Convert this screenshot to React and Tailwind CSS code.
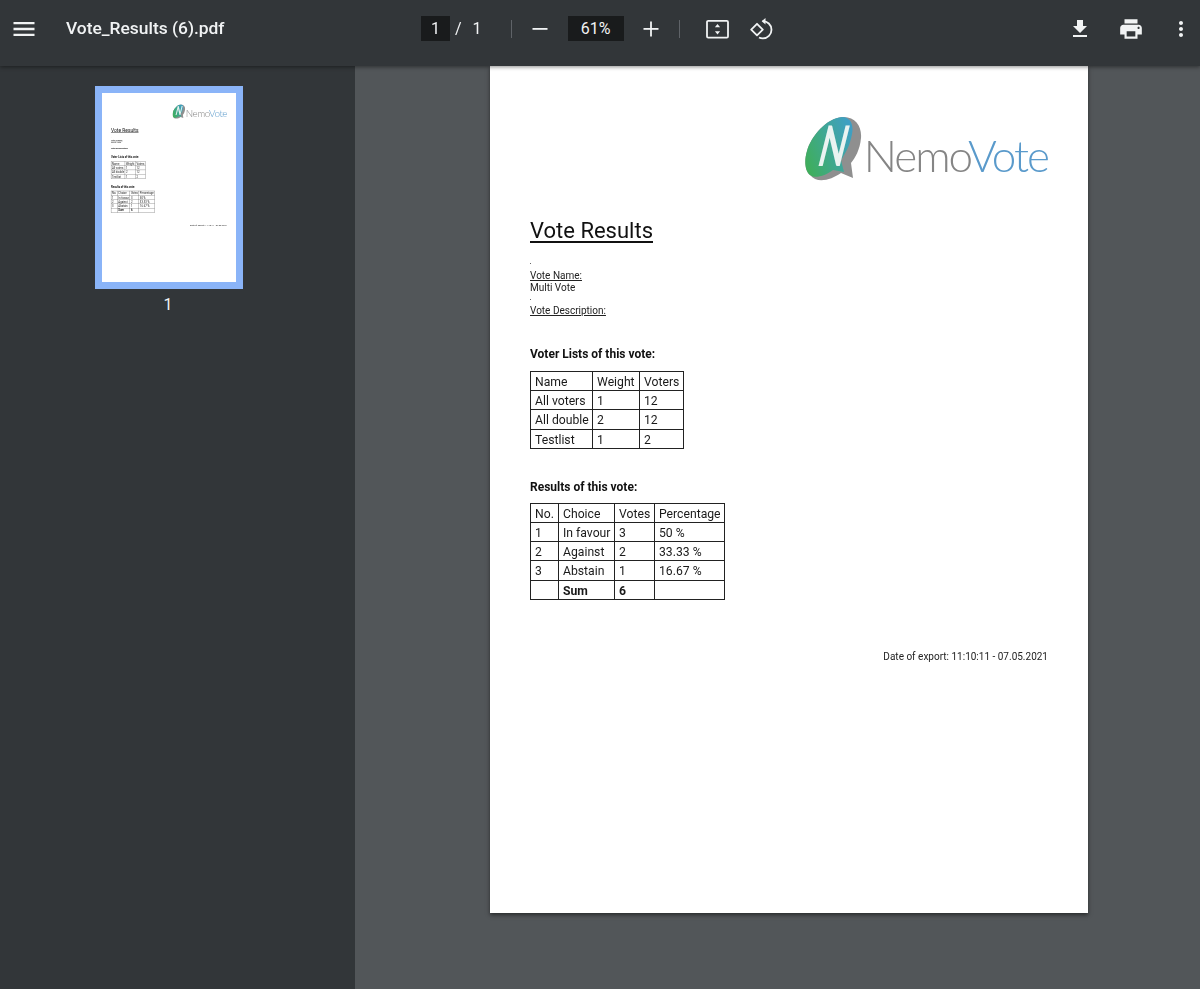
import React from "react";

const voterRows = [
  ["Name", "Weight", "Voters"],
  ["All voters", "1", "12"],
  ["All double", "2", "12"],
  ["Testlist", "1", "2"],
];

const resultRows = [
  ["No.", "Choice", "Votes", "Percentage"],
  ["1", "In favour", "3", "50 %"],
  ["2", "Against", "2", "33.33 %"],
  ["3", "Abstain", "1", "16.67 %"],
  ["", "Sum", "6", ""],
];

const Icon = ({ d, className }) => (
  <svg viewBox="0 0 24 24" fill="currentColor" className={className}>
    <path d={d} />
  </svg>
);

const Logo = ({ id }) => (
  <div className="flex h-[70px]">
    <div className="relative w-[58px] h-[70px] shrink-0">
      <svg viewBox="0 0 58 70" className="w-[58px] h-[70px]">
        <defs>
          <linearGradient id={id} x1="0" y1="0.75" x2="1" y2="0.25">
            <stop offset="0" stopColor="#3fae5c" />
            <stop offset="0.55" stopColor="#3fa796" />
            <stop offset="1" stopColor="#3f9fc4" />
          </linearGradient>
        </defs>
        <path d="M37 1C50 0 57 10 56 22C55 34 50 42 46 47L48 62L36 57C26 64 12 68 5 59C0 55-1 45 2 35C6 20 22 2 37 1z" fill="#8f8f8f" />
        <path d="M37 1C45 1 49 8 47 18C45 30 40 38 36 44L39 56L28 54C20 60 10 63 5 59C0 55-1 45 2 35C6 20 22 2 37 1z" fill={`url(#${id})`} />
      </svg>
      {/* the N sits on the bubble */}
      <span className="absolute left-[9px] top-[1px] origin-bottom-left [transform:skewX(-14deg)_scaleX(0.62)] font-['Lato',sans-serif] font-bold text-[56px] leading-none text-[#eaf3f1]">
        N
      </span>
    </div>
    <span className="ml-[1px] pt-[17px] font-['Lato',sans-serif] font-light text-[44px] tracking-[-2px] leading-none text-[#858585]">
      Nemo<span className="text-[#5a9acb]">Vote</span>
    </span>
  </div>
);

const DocTable = ({ rows, columns, lastBold }) => (
  <table className="border-collapse table-fixed text-[12.2px] leading-[16px] text-[#1a1a1a] border border-[#222]">
    <colgroup>
      {columns.map((w, i) => (
        <col key={i} style={{ width: w }} />
      ))}
    </colgroup>
    <tbody>
      {rows.map((row, r) => (
        <tr key={r} className="h-[19.2px]">
          {row.map((cell, c) => (
            <td
              key={c}
              className={`border border-[#222] p-0 pl-[4px] pt-[2px] whitespace-nowrap ${
                lastBold && r === rows.length - 1 ? "font-bold" : ""
              }`}
            >
              {cell}
            </td>
          ))}
        </tr>
      ))}
    </tbody>
  </table>
);

const PdfPage = ({ logoId }) => (
  <div className="w-[598px] h-[847px] bg-white font-['Roboto',sans-serif] text-[#111]">
    <div className="pt-[50px] px-[40px] will-change-transform">
      <div className="flex justify-end">
        <Logo id={logoId} />
      </div>
      <h1 className="mt-[31px] text-[22px] leading-[28px] underline underline-offset-[3px]">Vote Results</h1>
      <div className="mt-[18px] mb-[6px] w-px h-px bg-[#666]" />
      <p className="text-[10px] leading-[12px] underline text-[#222]">Vote Name:</p>
      <p className="text-[10px] leading-[12px] text-[#222]">Multi Vote</p>
      <div className="mt-[5px] mb-[5px] w-px h-px bg-[#666]" />
      <p className="text-[10px] leading-[12px] underline text-[#222]">Vote Description:</p>
      <p className="mt-[30px] text-[12px] leading-[14px] font-bold">Voter Lists of this vote:</p>
      <div className="mt-[10px]">
        <DocTable rows={voterRows} columns={[62, 47, 44]} />
      </div>
      <p className="mt-[31px] text-[12px] leading-[14px] font-bold">Results of this vote:</p>
      <div className="mt-[9px]">
        <DocTable rows={resultRows} columns={[28, 56, 40, 70]} lastBold />
      </div>
      <p className="mt-[51px] text-right text-[10px] leading-[12px] text-[#222]">Date of export: 11:10:11 - 07.05.2021</p>
    </div>
  </div>
);

export default function App() {
  return (
    <div className="w-[1200px] h-[989px] overflow-hidden flex flex-col bg-[#323639] font-['Roboto',sans-serif] text-[#f1f3f4] antialiased">
      {/* Toolbar */}
      <header className="relative z-10 h-[66px] shrink-0 flex items-center bg-[#323639] pb-[9px] shadow-[0_1px_4px_rgba(0,0,0,0.45)]">
        <Icon d="M3 18h18v-2H3v2zm0-5h18v-2H3v2zm0-7v2h18V6H3z" className="ml-[10px] w-[28px] h-[28px]" />
        <span className="ml-[28px] w-[355px] text-[17.4px] font-medium leading-none">Vote_Results (6).pdf</span>

        <div className="flex items-center text-[16px]">
          <span className="w-[29px] h-[25px] bg-[#191b1c] flex items-center justify-center">1</span>
          <span className="ml-[5px]">/</span>
          <span className="ml-[11px]">1</span>
          <span className="ml-[29px] w-px h-[18px] bg-[#5f6368]" />
          <svg viewBox="0 0 16 16" className="ml-[20px] w-[16px] h-[16px]" fill="currentColor">
            <rect x="0.5" y="7" width="15" height="1.8" />
          </svg>
          <span className="ml-[20px] w-[56px] h-[25px] bg-[#191b1c] flex items-center justify-center">61%</span>
          <svg viewBox="0 0 16 16" className="ml-[19px] w-[16px] h-[16px]" fill="currentColor">
            <rect x="0.5" y="7" width="15" height="1.8" />
            <rect x="7.1" y="0.5" width="1.8" height="15" />
          </svg>
          <span className="ml-[20px] w-px h-[18px] bg-[#5f6368]" />
          <svg viewBox="0 0 24 24" className="ml-[25px] w-[24px] h-[24px]" fill="currentColor">
            <rect x="2" y="3.900" width="21" height="16.800" rx="1.200" fill="none" stroke="currentColor" strokeWidth="1.800" />
            <path d="M12.500 7l2.600 3.300H9.900zM12.500 17.600l-2.600-3.300h5.200z" />
          </svg>
          <svg viewBox="0 0 24 24" className="ml-[21px] w-[24px] h-[24px]" fill="none" stroke="currentColor" strokeWidth="1.800">
            <path d="M7 6.800l5.800 5.800L7 18.400l-5.800-5.800z" strokeLinejoin="round" />
            <path d="M12.500 4.200c4.800-.2 9 3.500 9 8.500 0 4.800-3.900 8.700-8.700 8.700-1.400 0-2.700-.3-3.800-.9" />
            <path d="M15.500.9l-3.800 3.300 3.800 3.300z" fill="currentColor" stroke="none" />
          </svg>
        </div>

        <div className="ml-auto flex items-center">
          <Icon d="M19 9h-4V3H9v6H5l7 7 7-7zM5 18v2h14v-2H5z" className="w-[24px] h-[24px]" />
          <Icon d="M19 8H5c-1.660 0-3 1.340-3 3v6h4v4h12v-4h4v-6c0-1.660-1.340-3-3-3zm-3 11H8v-5h8v5zm3-7c-.550 0-1-.450-1-1s.450-1 1-1 1 .450 1 1-.450 1-1 1zm-1-9H6v4h12V3z" className="ml-[26px] w-[26px] h-[26px]" />
          <Icon d="M12 8c1.100 0 2-.900 2-2s-.900-2-2-2-2 .900-2 2 .900 2 2 2zm0 2c-1.100 0-2 .900-2 2s.900 2 2 2 2-.900 2-2-.900-2-2-2zm0 6c-1.100 0-2 .900-2 2s.900 2 2 2 2-.900 2-2-.900-2-2-2z" className="ml-[25px] mr-[7px] w-[24px] h-[24px]" />
        </div>
      </header>

      <div className="flex-1 flex min-h-0">
        {/* Thumbnail sidebar */}
        <aside className="w-[355px] shrink-0 bg-[#323639] flex flex-col items-center pt-[20px] pr-[17px]">
          <div className="w-[148px] h-[203px] border-[7px] border-[#8ab4f8] bg-white overflow-hidden">
            <div className="w-[598px] h-[847px] origin-top-left scale-[0.224]">
              <PdfPage logoId="bubble-thumb" />
            </div>
          </div>
          <span className="mt-[8px] mr-[2px] text-[16px] leading-[16px]">1</span>
        </aside>

        {/* Viewer */}
        <main className="flex-1 bg-[#525659] pl-[135px]">
          <div className="w-[598px] shadow-[0_2px_4px_rgba(0,0,0,0.5)]">
            <PdfPage logoId="bubble-main" />
          </div>
        </main>
      </div>
    </div>
  );
}
